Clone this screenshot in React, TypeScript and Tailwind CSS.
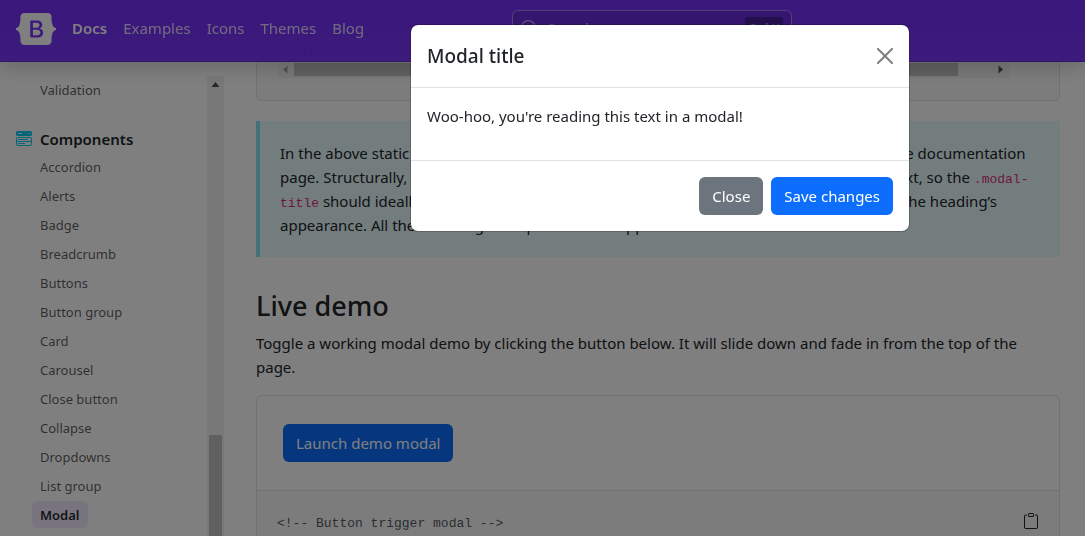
import type { ReactNode } from "react";
import { BsClipboard, BsMenuButtonWideFill, BsSearch } from "react-icons/bs";

const navLinks = ["Docs", "Examples", "Icons", "Themes", "Blog"];

const components = [
  "Accordion",
  "Alerts",
  "Badge",
  "Breadcrumb",
  "Buttons",
  "Button group",
  "Card",
  "Carousel",
  "Close button",
  "Collapse",
  "Dropdowns",
  "List group",
  "Modal",
];

function Logo() {
  return (
    <svg viewBox="0 0 118 94" className="h-8 w-10 fill-white" role="img" aria-label="Bootstrap">
      <path
        fillRule="evenodd"
        clipRule="evenodd"
        d="M24.509 0c-6.733 0-11.715 5.893-11.492 12.284.214 6.14-.064 14.092-2.066 20.577C8.943 39.365 5.547 43.485 0 44.014v5.972c5.547.529 8.943 4.649 10.951 11.153 2.002 6.485 2.28 14.437 2.066 20.577C12.794 88.106 17.776 94 24.51 94H93.5c6.733 0 11.714-5.893 11.491-12.284-.214-6.14.064-14.092 2.066-20.577 2.009-6.504 5.396-10.624 10.943-11.153v-5.972c-5.547-.529-8.934-4.649-10.943-11.153-2.002-6.484-2.28-14.437-2.066-20.577C105.214 5.894 100.233 0 93.5 0H24.508zM80 57.863C80 66.663 73.436 72 62.543 72H44a2 2 0 01-2-2V24a2 2 0 012-2h18.437c9.083 0 15.044 4.92 15.044 12.474 0 5.302-4.01 10.049-9.119 10.88v.277C75.317 46.394 80 51.21 80 57.863zM60.521 28.34H49.948v14.934h8.905c6.884 0 10.68-2.772 10.68-7.727 0-4.643-3.264-7.207-9.012-7.207zM49.948 49.2v16.458H60.91c7.167 0 10.964-2.876 10.964-8.281 0-5.406-3.903-8.178-11.425-8.178H49.948z"
      />
    </svg>
  );
}

function Header() {
  return (
    <header className="fixed inset-x-0 top-0 z-10 flex h-[62px] items-center bg-linear-to-b from-[#7630f8] to-[#712cf9]/95 px-4 pb-1 shadow-[0_8px_16px_rgba(0,0,0,0.15),inset_0_-1px_0_rgba(0,0,0,0.15)]">
      <a href="#home">
        <Logo />
      </a>
      <nav className="ml-4 flex gap-4 pb-0.5 text-[15px] leading-6">
        {navLinks.map((label, i) => (
          <a
            key={label}
            href={`#${label.toLowerCase()}`}
            className={i === 0 ? "font-semibold text-white" : "text-white/80"}
          >
            {label}
          </a>
        ))}
      </nav>
      <button
        type="button"
        className="ml-[148px] flex h-[38px] w-[280px] items-center gap-2 rounded-md border border-white/40 bg-black/10 px-2 text-white/60"
      >
        <BsSearch className="size-[18px]" />
        <span className="pb-0.5 text-[15px] leading-6">Search</span>
        <kbd className="ml-auto rounded bg-black/30 px-1 py-1 font-['Noto_Sans',sans-serif] text-xs leading-4">
          Ctrl K
        </kbd>
      </button>
    </header>
  );
}

function Arrow({ points, className }: { points: string; className: string }) {
  return (
    <svg viewBox="0 0 17 17" className={`size-[17px] shrink-0 ${className}`} aria-hidden="true">
      <polygon points={points} />
    </svg>
  );
}

function SidebarLink({ label, active }: { label: string; active?: boolean }) {
  return (
    <li className="flex">
      <a
        href={`#${label.toLowerCase().replace(" ", "-")}`}
        className={
          active
            ? "rounded-md bg-[#f1e8fe] px-2 pt-1 pb-0.5 font-semibold text-black/85"
            : "px-2 pt-1 pb-0.5 text-black/65"
        }
      >
        {label}
      </a>
    </li>
  );
}

function Sidebar() {
  return (
    <aside className="flex w-56 shrink-0 overflow-hidden pt-[76px]">
      <nav className="min-w-0 flex-1 pl-4 text-[13px] leading-[21px]">
        <ul className="pl-4">
          <SidebarLink label="Validation" />
        </ul>
        <h2 className="mt-6 flex items-center gap-2 text-[15px] leading-6 font-semibold text-[#212529]">
          <BsMenuButtonWideFill className="size-4 text-[#0dcaf0]" />
          Components
        </h2>
        <ul className="mt-0.5 flex flex-col gap-0.5 pl-4">
          {components.map((label) => (
            <SidebarLink key={label} label={label} active={label === "Modal"} />
          ))}
        </ul>
      </nav>
      <div className="flex w-[17px] flex-col bg-[#f1f1f1]" aria-hidden="true">
        <Arrow points="8.5,6 12.5,11 4.5,11" className="fill-[#505050]" />
        <div className="mx-0.5 mt-[342px] flex-1 bg-[#c1c1c1]" />
      </div>
    </aside>
  );
}

function Code({ children }: { children: ReactNode }) {
  return (
    <code className="font-['Liberation_Mono',monospace] text-[13px] leading-none text-[#d63384]">
      {children}
    </code>
  );
}

const primaryButton = "rounded-md bg-[#0d6efd] px-[13px] py-[7px] text-[15px] leading-6 text-white";

function Content() {
  return (
    <main className="flex min-w-0 flex-1 flex-col pr-[25px] pl-8 text-[15px] leading-6 text-[#212529]">
      <section className="rounded-b-md border border-t-0 border-[#dee2e6] bg-[#f8f9fa] px-5 pt-10 pb-[22px]">
        <pre className="font-['Liberation_Mono',monospace] text-[13px] leading-[21px]">{"</div>"}</pre>
        <div className="mr-[30px] flex h-[17px] bg-[#f1f1f1]" aria-hidden="true">
          <Arrow points="6,8.5 10.5,4.5 10.5,12.5" className="fill-[#a3a3a3]" />
          <div className="my-0.5 mr-[34px] flex-1 bg-[#c1c1c1]" />
          <Arrow points="11,8.5 6.5,4.5 6.5,12.5" className="fill-[#505050]" />
        </div>
      </section>

      <p className="mt-5 border-l-4 border-[#87e1f2] bg-[#e8fafd] p-5">
        In the above static example, we use <Code>&lt;h5&gt;</Code>, to avoid issues with the heading hierarchy in the documentation page. Structurally, however, modal dialogs represent their own separate document/context, so the <Code>.modal-title</Code> should ideally be an <Code>&lt;h1&gt;</Code>. If necessary, you can use the font size utilities to control the heading’s appearance. All the following examples use this approach.
      </p>

      <h3 className="mt-8 text-[27px] leading-[34px] font-medium">Live demo</h3>
      <p className="mt-2">
        Toggle a working modal demo by clicking the button below. It will slide down and fade in from the top of the page.
      </p>

      <section className="mt-4 flex flex-1 flex-col rounded-t-md border border-b-0 border-[#dee2e6]">
        <div className="border-b border-[#dee2e6] px-[26px] py-7">
          <button type="button" className={primaryButton}>
            Launch demo modal
          </button>
        </div>
        <div className="flex flex-1 items-start justify-between bg-[#f8f9fa] px-5 pt-[22px]">
          <pre className="font-['Liberation_Mono',monospace] text-[13px] leading-[21px] text-[#565c62]">
            {"<!-- Button trigger modal -->"}
          </pre>
          <button type="button" aria-label="Copy to clipboard" className="text-[#212529]">
            <BsClipboard className="size-4" />
          </button>
        </div>
      </section>
    </main>
  );
}

function Modal() {
  return (
    <div className="fixed inset-0 z-20 flex items-start justify-end bg-black/50 pt-6 pr-[175px]">
      <div
        role="dialog"
        aria-modal="true"
        aria-labelledby="modal-title"
        className="w-full max-w-[500px] rounded-lg border border-black/20 bg-white bg-clip-padding text-[15px] leading-6 text-[#212529]"
      >
        <div className="flex items-center justify-between border-b border-[#dee2e6] p-4">
          <h1 id="modal-title" className="text-[19px] leading-[30px] font-medium">
            Modal title
          </h1>
          <button type="button" aria-label="Close dialog" className="opacity-50">
            <svg viewBox="0 0 16 16" className="size-4 fill-black" aria-hidden="true">
              <path d="M.293.293a1 1 0 011.414 0L8 6.586 14.293.293a1 1 0 111.414 1.414L9.414 8l6.293 6.293a1 1 0 01-1.414 1.414L8 9.414l-6.293 6.293a1 1 0 01-1.414-1.414L6.586 8 .293 1.707a1 1 0 010-1.414z" />
            </svg>
          </button>
        </div>
        <p className="px-4 pt-4 pb-8">Woo-hoo, you're reading this text in a modal!</p>
        <div className="flex justify-end gap-2 border-t border-[#dee2e6] p-4">
          <button
            type="button"
            className="rounded-md bg-[#6c757d] px-[13px] py-[7px] text-[15px] leading-6 text-white"
          >
            Close
          </button>
          <button type="button" className={primaryButton}>
            Save changes
          </button>
        </div>
      </div>
    </div>
  );
}

export default function App() {
  return (
    <div className="flex h-screen overflow-hidden bg-white font-['Noto_Sans',sans-serif]">
      <Header />
      <Sidebar />
      <Content />
      <Modal />
    </div>
  );
}
